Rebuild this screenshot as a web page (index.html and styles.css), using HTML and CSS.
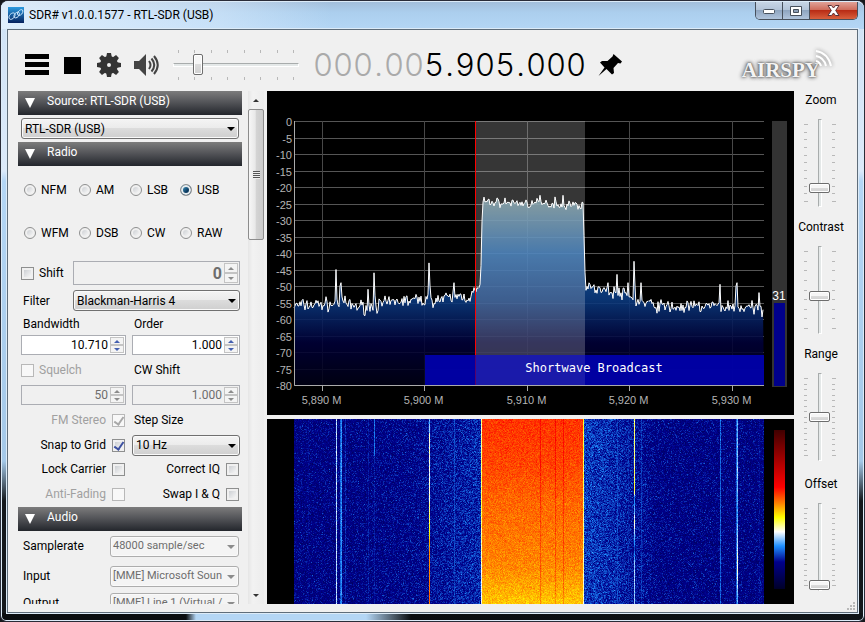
FILE: index.html
```
<!DOCTYPE html>
<html lang="en">
	<head>
		<meta charset="UTF-8">
		<title>SDR# v1.0.0.1577 - RTL-SDR (USB)</title>
		<link rel="stylesheet" href="styles.css">
	</head>
	<body>
		<div class="window">
			<header class="titlebar">
				<svg class="app_icon" viewBox="0 0 16 16">
					<defs><linearGradient id="ico" x1="0" y1="0" x2="0" y2="1"><stop offset="0" stop-color="#2b9be0"/><stop offset="1" stop-color="#06215e"/></linearGradient></defs>
					<rect width="16" height="16" fill="url(#ico)"/>
					<path d="M1 10.500C1 7.500 4 5.500 6 6s1 4-1 5.500-4 1-4-1zM6 8.500C7 5.500 10 4.500 11 5.500s0 4-2 5-3.500 0-3-2zM9.500 6C11 3 13.500 2 14.500 3s0 4-2 5-3.500 0-3-2z" fill="none" stroke="#cfeaff" stroke-width="1"/>
				</svg>
				<h1>SDR# v1.0.0.1577 - RTL-SDR (USB)</h1>
				<div class="win_buttons">
					<button type="button" class="win_min" aria-label="Minimize"><svg width="14" height="8" viewBox="0 0 14 8"><rect x="1.500" y="2.500" width="11" height="4" rx="1" fill="#fff" stroke="#47505c"/></svg></button>
					<button type="button" class="win_max" aria-label="Maximize"><svg width="12" height="10" viewBox="0 0 12 10"><path d="M.5.5h11v9H.5z" fill="#fff" stroke="#47505c"/><path d="M3.500 3.500h5v3h-5z" fill="#8b9db5" stroke="#47505c"/></svg></button>
					<button type="button" class="win_close" aria-label="Close"><svg width="13" height="11" viewBox="0 0 13 11"><path d="M1 .5h3.500l2 2.500 2-2.500H12L8.700 5.500l3.300 5H8.500l-2-2.500-2 2.500H1l3.300-5z" fill="#fff" stroke="#5a3036"/></svg></button>
				</div>
			</header>

			<main class="client">
				<div class="toolbar">
					<div class="tools">
						<button type="button" aria-label="Menu"><svg width="24" height="22" viewBox="0 0 24 22"><path d="M0 0h24v5H0zM0 8h24v5H0zM0 16h24v5H0z"/></svg></button>
						<button type="button" aria-label="Stop"><svg width="17" height="17" viewBox="0 0 17 17"><path d="M0 0h17v17H0z"/></svg></button>
						<button type="button" aria-label="Settings"><svg width="24" height="24" viewBox="0 0 24 24"><g fill="#333"><path fill-rule="evenodd" d="M12 3a9 9 0 1 0 0 18 9 9 0 0 0 0-18zm0 7a2 2 0 1 1 0 4 2 2 0 0 1 0-4z"/><path id="tooth" d="M10 0h4l1 5H9z"/><use href="#tooth" transform="rotate(45 12 12)"/><use href="#tooth" transform="rotate(90 12 12)"/><use href="#tooth" transform="rotate(135 12 12)"/><use href="#tooth" transform="rotate(180 12 12)"/><use href="#tooth" transform="rotate(225 12 12)"/><use href="#tooth" transform="rotate(270 12 12)"/><use href="#tooth" transform="rotate(315 12 12)"/></g></svg></button>
						<button type="button" aria-label="Mute"><svg width="25" height="22" viewBox="0 0 25 22"><path d="M0 7h5l7-7v22l-7-7H0z" fill="#444"/><path d="M15 7q3 4 0 8M17.500 4.500q5.500 6.500 0 13M20 2q7.500 9 0 18" fill="none" stroke="#444" stroke-width="2"/></svg></button>
					</div>
					<div class="volume">
						<div class="ticks" data-ticks="8"></div>
						<input type="range" min="0" max="100" value="17" aria-label="Volume">
						<div class="ticks" data-ticks="8"></div>
					</div>
					<div class="frequency">
						<span class="off">0</span><span class="off">0</span><span class="off">0</span><span class="dot off">.</span><span class="off">0</span><span class="off">0</span><span>5</span><span class="dot">.</span><span>9</span><span>0</span><span>5</span><span class="dot">.</span><span>0</span><span>0</span><span>0</span>
					</div>
					<button type="button" class="pin" aria-label="Center tuning"><svg width="25" height="24" viewBox="0 0 25 24"><path d="M15.500 1l8.500 7.500-1.500 2-2.500-.5-4.500 5 .5 5-2 1.500-5.500-5.500L.5 23l6-8.500L2 9.500 4 8l5.500 0 5-4.500z"/></svg></button>
					<a class="logo" href="#"><span>AIRSPY</span><svg width="20" height="20" viewBox="0 0 20 20"><path d="M2 12q4 1 5 5M2 7q8 1.500 10 10M2 2q12 2 15 15" fill="none" stroke="#fff" stroke-width="2"/></svg></a>
				</div>

				<div class="content">
					<form class="sidebar">
						<h2>Source: RTL-SDR (USB)</h2>
						<div class="source">
							<div class="combo"><select aria-label="Source"><option>RTL-SDR (USB)</option></select></div>
						</div>

						<h2>Radio</h2>
						<div class="modes">
							<label><input type="radio" name="mode">NFM</label>
							<label><input type="radio" name="mode">AM</label>
							<label><input type="radio" name="mode">LSB</label>
							<label><input type="radio" name="mode" checked>USB</label>
							<label><input type="radio" name="mode">WFM</label>
							<label><input type="radio" name="mode">DSB</label>
							<label><input type="radio" name="mode">CW</label>
							<label><input type="radio" name="mode">RAW</label>
						</div>
						<div class="shift">
							<label><input type="checkbox">Shift</label>
							<div class="spin big disabled"><input type="text" value="0" aria-label="Shift frequency" disabled><button type="button" class="up" aria-label="Up" disabled></button><button type="button" class="down" aria-label="Down" disabled></button></div>
							<label class="pad" for="filter">Filter</label>
							<div class="combo"><select id="filter"><option>Blackman-Harris 4</option></select></div>
						</div>
						<div class="params">
							<label class="pad" for="bandwidth">Bandwidth</label>
							<label class="pad" for="order">Order</label>
							<div class="spin"><input type="text" id="bandwidth" value="10.710"><button type="button" class="up" aria-label="Up"></button><button type="button" class="down" aria-label="Down"></button></div>
							<div class="spin"><input type="text" id="order" value="1.000"><button type="button" class="up" aria-label="Up"></button><button type="button" class="down" aria-label="Down"></button></div>
							<label class="gray"><input type="checkbox" disabled>Squelch</label>
							<label class="pad" for="cwshift">CW Shift</label>
							<div class="spin disabled"><input type="text" value="50" aria-label="Squelch level" disabled><button type="button" class="up" aria-label="Up" disabled></button><button type="button" class="down" aria-label="Down" disabled></button></div>
							<div class="spin disabled"><input type="text" id="cwshift" value="1.000" disabled><button type="button" class="up" aria-label="Up" disabled></button><button type="button" class="down" aria-label="Down" disabled></button></div>
							<label class="right gray">FM Stereo<input type="checkbox" checked disabled></label>
							<label class="pad" for="step">Step Size</label>
							<label class="right">Snap to Grid<input type="checkbox" checked></label>
							<div class="combo"><select id="step"><option>10 Hz</option></select></div>
							<label class="right">Lock Carrier<input type="checkbox"></label>
							<label class="right">Correct IQ<input type="checkbox"></label>
							<label class="right gray">Anti-Fading<input type="checkbox" disabled></label>
							<label class="right">Swap I &amp; Q<input type="checkbox"></label>
						</div>

						<h2>Audio</h2>
						<div class="audio">
							<label for="samplerate">Samplerate</label>
							<div class="combo disabled"><select id="samplerate" disabled><option>48000 sample/sec</option></select></div>
							<label for="input">Input</label>
							<div class="combo disabled"><select id="input" disabled><option>[MME] Microsoft Soun</option></select></div>
							<label for="output">Output</label>
							<div class="combo disabled"><select id="output" disabled><option>[MME] Line 1 (Virtual /</option></select></div>
						</div>
					</form>

					<div class="scrollbar">
						<button type="button" class="up" aria-label="Scroll up"></button>
						<div class="thumb"><i></i></div>
						<button type="button" class="down" aria-label="Scroll down"></button>
					</div>

					<section class="displays">
						<svg class="spectrum" id="spectrum"></svg>
						<div class="waterfall">
							<canvas id="waterfall"></canvas>
							<div class="legend"></div>
						</div>
					</section>

					<aside class="sliders">
						<div class="slider">
							<label for="zoom">Zoom</label>
							<div class="track"><div class="ticks" data-ticks="11"></div><input type="range" id="zoom" min="0" max="100" value="17"><div class="ticks" data-ticks="11"></div></div>
						</div>
						<div class="slider">
							<label for="contrast">Contrast</label>
							<div class="track"><div class="ticks" data-ticks="9"></div><input type="range" id="contrast" min="0" max="100" value="42"><div class="ticks" data-ticks="9"></div></div>
						</div>
						<div class="slider">
							<label for="range">Range</label>
							<div class="track"><div class="ticks" data-ticks="15"></div><input type="range" id="range" min="0" max="100" value="50"><div class="ticks" data-ticks="15"></div></div>
						</div>
						<div class="slider">
							<label for="offset">Offset</label>
							<div class="track"><div class="ticks" data-ticks="16"></div><input type="range" id="offset" min="0" max="100" value="0"><div class="ticks" data-ticks="16"></div></div>
						</div>
					</aside>
				</div>
				<svg class="grip" width="9" height="9" viewBox="0 0 9 9"><path d="M6 0h2v2H6zM3 3h2v2H3zM6 3h2v2H6zM0 6h2v2H0zM3 6h2v2H3zM6 6h2v2H6z" fill="#b8b8b8"/></svg>
			</main>
		</div>
		<script src="app.js"></script>
	</body>
</html>
```
FILE: styles.css
```
*{
	box-sizing: border-box;
	margin: 0;
	padding: 0;
}
body{
	background-color: #15181c;
	font-family: Roboto, "Liberation Sans", sans-serif;
	font-size: 12px;
	line-height: 16px;
	color: #000;
}
button,input,select{
	font: inherit;
	color: inherit;
	border: 0;
	background: none;
}
input,select{
	min-width: 0;
	outline: 0;
}
/* window frame */
.window{
	display: flex;
	flex-direction: column;
	height: 100vh;
	padding: 0 6px 8px 6px;
	border: 1px solid #2a2c38;
	border-radius: 8px 8px 6px 6px;
	box-shadow: inset 0 0 0 1px #dcebf8;
	background:
		linear-gradient(90deg,#0a0d10 0,#0a0d10 185px,#b4d6f5 195px,#b4d6f5 365px,#0a0d10 410px,#0f1418 100%) bottom/100% 8px no-repeat,
		linear-gradient(#cfe2f5 0,#dceafa 170px,#b4d6f5 180px,#a4c8e8 460px,#14181c 500px,#14181c 100%);
}
.titlebar{
	display: flex;
	align-items: flex-start;
	height: 28px;
	margin: 0 -6px;
	padding: 0 6px 0 7px;
	border-top: 1px solid #dcebf8;
	border-radius: 7px 7px 0 0;
	background: linear-gradient(90deg,rgba(235,245,255,.8) 0,rgba(220,236,252,.5) 220px,transparent 330px),linear-gradient(#a3bfdb,#accfee 40%,#b4d6f5);
}
.app_icon{
	width: 16px;
	height: 16px;
	margin: 5px 5px 0 0;
}
.titlebar h1{
	flex: 1;
	font-size: 12px;
	font-weight: normal;
	line-height: 26px;
	white-space: nowrap;
}
.win_buttons{
	display: flex;
	height: 18px;
	border: 1px solid #47505c;
	border-top: 0;
	border-radius: 0 0 5px 5px;
	overflow: hidden;
}
.win_buttons button{
	display: flex;
	align-items: center;
	justify-content: center;
	width: 27px;
	border-right: 1px solid #47505c;
	background: linear-gradient(#c7d5e5,#b3c4d8 45%,#8fa5c0 50%,#b0c4dc);
}
.win_buttons .win_close{
	width: 47px;
	border: 0;
	background: linear-gradient(#e0a298,#cf6d5c 45%,#b92c15 50%,#d9603d);
}
.client{
	flex: 1;
	display: flex;
	flex-direction: column;
	min-height: 0;
	position: relative;
	padding: 0 9px 8px 10px;
	border: 1px solid #5f6d7a;
	background-color: #f0f0f0;
	box-shadow: 0 0 0 1px #dcebf8;
}
.grip{
	position: absolute;
	right: 1px;
	bottom: 1px;
}
/* toolbar */
.toolbar{
	display: flex;
	align-items: center;
	height: 61px;
	padding-top: 9px;
}
.tools{
	display: flex;
	align-items: center;
	gap: 13px;
	margin-left: 7px;
}
.tools button,.pin{
	display: flex;
}
.tools button:first-child{
	margin-right: 2px;
}
.tools button:nth-child(2){
	margin-right: 3px;
}
.volume{
	display: flex;
	flex-direction: column;
	width: 126px;
	margin: 0 14px;
	gap: 1px;
}
.volume .ticks{
	display: flex;
	justify-content: space-between;
	padding: 0 5px;
}
.volume .ticks i{
	width: 1px;
	height: 3px;
	background-color: #b8b8b8;
}
.frequency{
	display: flex;
	font-family: Inter, "DejaVu Sans", sans-serif;
	font-size: 31px;
	font-weight: 300;
	line-height: 36px;
}
.frequency span{
	width: 20px;
	text-align: center;
}
.frequency .dot{
	width: 11px;
}
.frequency .off{
	color: #aaa;
}
.pin{
	margin-left: 12px;
}
.logo{
	display: flex;
	align-items: flex-start;
	margin: 0 14px 0 auto;
	color: #f4f4f4;
	text-decoration: none;
}
.logo span{
	padding-top: 10px;
	font-family: "Liberation Serif", serif;
	font-size: 21px;
	font-weight: bold;
	line-height: 22px;
	text-shadow: 0 0 2px #555,0 0 4px #666,-1px 0 4px #888;
}
.logo svg{
	margin-left: -6px;
	filter: drop-shadow(0 0 2px #888);
}
/* range inputs */
input[type=range]{
	-webkit-appearance: none;
	appearance: none;
	width: 126px;
	height: 22px;
}
input[type=range]::-webkit-slider-runnable-track{
	height: 4px;
	border: 1px solid #fff;
	border-top-color: #a8acac;
	background-color: #e4e8e8;
}
input[type=range]::-webkit-slider-thumb{
	-webkit-appearance: none;
	width: 10px;
	height: 21px;
	margin-top: -10px;
	border: 1px solid #6d6d6d;
	border-radius: 2px;
	background: linear-gradient(#f6f6f6 50%,#dcdcdc 50%,#d0d0d0);
	box-shadow: inset 0 0 0 1px #fff;
}
.sliders{
	width: 54px;
}
.slider{
	display: flex;
	flex-direction: column;
	align-items: center;
	height: 127px;
}
.slider:last-child{
	margin-top: 3px;
}
.slider label{
	margin-bottom: 10px;
	line-height: 18px;
}
.track{
	display: flex;
	margin-right: 3px;
	gap: 1px;
}
.track .ticks{
	display: flex;
	flex-direction: column;
	justify-content: space-between;
	width: 4px;
	padding: 5px 0;
}
.track .ticks i{
	width: 3px;
	height: 1px;
	margin: 0 auto;
	background-color: #b8b8b8;
}
.track .ticks i:first-child,.track .ticks i:last-child{
	width: 4px;
}
.track input[type=range]{
	writing-mode: vertical-lr;
	direction: rtl;
	width: 22px;
	height: 88px;
}
.track input[type=range]::-webkit-slider-runnable-track{
	width: 4px;
	height: 88px;
	border-color: #a8acac #fff #fff #a8acac;
}
.track input[type=range]::-webkit-slider-thumb{
	width: 21px;
	height: 10px;
	margin: 0 0 0 -10px;
}
/* content */
.content{
	flex: 1;
	display: flex;
	min-height: 0;
}
.sidebar{
	width: 224px;
	overflow: hidden;
}
.sidebar h2{
	display: flex;
	align-items: center;
	height: 24px;
	padding: 0 0 4px 29px;
	position: relative;
	background: linear-gradient(#7c7c7c,#55565a 45%,#23262c);
	color: #fff;
	font-size: 12px;
	font-weight: normal;
}
.sidebar h2::before{
	content: "";
	position: absolute;
	left: 7px;
	top: 7px;
	border: 5px solid transparent;
	border-top: 10px solid #fff;
	border-bottom: 0;
}
.sidebar label{
	display: flex;
	align-items: center;
	gap: 5px;
	white-space: nowrap;
}
.sidebar .pad{
	padding-left: 2px;
}
.sidebar .right{
	justify-content: flex-end;
	padding-right: 1px;
	gap: 6px;
}
.sidebar .gray{
	color: #a0a0a0;
}
.source{
	padding: 3px;
}
.modes{
	display: grid;
	grid-template-columns: 55px 51px 50px 1fr;
	grid-template-rows: 43px 43px;
	padding: 2px 0 5px 6px;
}
.shift{
	display: grid;
	grid-template-columns: 52px 1fr;
	grid-template-rows: 28px 27px;
	align-items: center;
	padding: 0 2px 0 3px;
}
.params{
	display: grid;
	grid-template-columns: 105px 1fr;
	grid-template-rows: 20px 22px 28px 22px 28px 22px 26px 24px;
	column-gap: 6px;
	align-items: center;
	padding: 0 2px 1px 3px;
}
.audio{
	display: grid;
	grid-template-columns: 87px 1fr;
	grid-template-rows: 30px 30px 24px;
	align-items: center;
	padding: 0 3px 0 5px;
}
.combo{
	position: relative;
}
.combo select{
	-webkit-appearance: none;
	appearance: none;
	display: block;
	width: 100%;
	height: 21px;
	padding: 0 14px 0 3px;
	border: 1px solid #707070;
	border-radius: 3px;
	background: linear-gradient(#f4f4f4,#ebebeb 48%,#dcdcdc 50%,#cfcfcf);
	box-shadow: inset 0 0 0 1px #fafafa;
}
.combo::after{
	content: "";
	position: absolute;
	right: 4px;
	top: 9px;
	border: 4px solid transparent;
	border-top-color: #000;
	border-bottom: 0;
	pointer-events: none;
}
.combo.disabled select{
	padding-left: 2px;
	border-color: #adadad;
	background: #f4f4f4;
	color: #6d6d6d;
	font-size: 11px;
	opacity: 1;
}
.combo.disabled::after{
	border-top-color: #8c8c8c;
}
.spin{
	display: grid;
	grid-template-columns: 1fr 14px;
	grid-template-rows: 1fr 1fr;
	height: 20px;
	padding: 1px;
	border: 1px solid #abadb3;
	background-color: #fff;
}
.spin.big{
	height: 24px;
}
.spin.big input{
	font-size: 16px;
	font-weight: bold;
}
.spin input{
	grid-row: 1 / 3;
	width: 100%;
	padding-right: 2px;
	text-align: right;
}
.spin.disabled{
	background-color: #f0f0f0;
	color: #6d6d6d;
}
.up,.down{
	display: flex;
	align-items: center;
	justify-content: center;
}
.spin button{
	border: 1px solid #c4c4c4;
	background-color: #f4f4f4;
	color: #4560b0;
}
.spin.disabled button{
	color: #8c8c8c;
}
.up::before,.down::before{
	content: "";
	border: 3px solid transparent;
	border-bottom-color: currentColor;
	border-top: 0;
}
.down::before{
	border: 3px solid transparent;
	border-top-color: currentColor;
	border-bottom: 0;
}
input[type=checkbox],input[type=radio]{
	-webkit-appearance: none;
	appearance: none;
	flex: none;
	display: flex;
	align-items: center;
	justify-content: center;
	width: 13px;
	height: 13px;
	border: 1px solid #8e8f8f;
	background: linear-gradient(135deg,#cdd0d4,#f6f6f6) content-box #f8f8f8;
	padding: 2px;
}
input[type=radio]{
	width: 12px;
	height: 12px;
	border-radius: 50%;
}
input[type=radio]:checked{
	background: linear-gradient(135deg,#4fb4e0,#0b3a60 60%);
	box-shadow: inset 0 0 0 2px #e8ecee;
}
input[type=checkbox]:checked{
	position: relative;
}
input[type=checkbox]:checked::before{
	content: "";
	position: absolute;
	left: 3px;
	top: 0;
	width: 4px;
	height: 8px;
	border: solid #3c50a0;
	border-width: 0 2px 2px 0;
	transform: rotate(35deg);
}
input[type=checkbox]:disabled{
	border-color: #b8b8b8;
	background: #f8f8f8;
}
input[type=checkbox]:disabled::before{
	border-color: #a8a8a8;
}
/* scrollbar */
.scrollbar{
	display: flex;
	flex-direction: column;
	width: 16px;
	margin: 0 3px 0 6px;
	background: linear-gradient(90deg,#e6e6e6,#f2f2f2 30%,#ececec);
}
.scrollbar button{
	height: 18px;
	color: #333;
}
.scrollbar .down{
	margin-top: auto;
}
.scrollbar .thumb{
	display: flex;
	align-items: center;
	justify-content: center;
	height: 131px;
	border: 1px solid #8c8c8c;
	border-radius: 2px;
	background: linear-gradient(90deg,#f6f6f6,#e8e8e8 45%,#d4d4d4 50%,#cacaca);
}
.scrollbar .thumb i{
	width: 7px;
	height: 8px;
	background: repeating-linear-gradient(#555 0,#555 1px,#eee 1px,#eee 2px);
}
/* spectrum and waterfall */
.displays{
	flex: 1;
	display: flex;
	flex-direction: column;
	gap: 4px;
	min-width: 0;
}
.spectrum{
	flex: 324 1 0;
	width: 100%;
	min-height: 0;
	background-color: #000;
	font-family: "Liberation Sans", sans-serif;
	font-size: 11px;
}
.spectrum .scale{
	fill: #b4b4b4;
}
.spectrum .band{
	fill: #fff;
	font-family: "DejaVu Sans Mono", monospace;
	font-size: 12px;
}
.waterfall{
	flex: 185 1 0;
	display: flex;
	min-height: 0;
	padding: 0 9px 0 27px;
	background-color: #000;
}
.waterfall canvas{
	flex: 1;
	min-width: 0;
	height: 100%;
}
.legend{
	width: 11px;
	margin: 11px 0 15px 10px;
	background: linear-gradient(#400000,#f00 36%,#ff8000 46%,#ff0 55%,#fff 64%,#1e90ff 73%,#00008b 83%,#000028);
}
```
FILE: app.js
```
var seed=7;
function rnd(){
	seed=(seed*16807)%2147483647;
	return seed/2147483647;
}
function gauss(){
	return rnd()+rnd()+rnd()-1.5;
}
// value at x on a list of [x,value] points
function curve(pts,x){
	if(x<=pts[0][0]) return pts[0][1];
	for(var i=1;i<pts.length;i++){
		if(x<=pts[i][0]){
			var a=pts[i-1],b=pts[i];
			return a[1]+(b[1]-a[1])*(x-a[0])/(b[0]-a[0]);
		}
	}
	return pts[pts.length-1][1];
}

// slider ticks
document.querySelectorAll('[data-ticks]').forEach(function(el){
	el.innerHTML='<i></i>'.repeat(el.dataset.ticks);
});

// positions below are in 1/470 of the displayed span
var SPAN=470;
var floor_db=[[0,-56],[28,-55.5],[60,-56],[75,-56.5],[105,-54.5],[150,-54],[165,-53],[175,-53.5],[180,-52],[186.5,-50],[188.5,-24.5],[289,-25.5],[291.5,-50],[310,-51],[335,-53],[345,-55],[365,-56],[385,-56.5],[420,-56],[470,-57]];
var peaks=[[42,-45],[43,-54],[46,-50],[47,-49],[51,-53],[74,-51],[80,-46],[81,-53],[135,-43],[136,-50],[160,-49],[246,-22.5],[261,-23],[269,-22.5],[323,-46.5],[334,-49],[340,-42.5],[341,-50],[347,-49],[426,-49.5],[442,-50],[443,-49],[465,-52]];

function drawSpectrum(){
	var svg=document.getElementById('spectrum');
	var w=svg.clientWidth,h=svg.clientHeight;
	var left=27,right=w-30,top=30,bottom=h-30;
	var sx=(right-left)/SPAN,sy=(bottom-top)/80;
	var X=function(x){return left+x*sx;};
	var Y=function(db){return top-db*sy;};
	var s='<defs><linearGradient id="fill" gradientUnits="userSpaceOnUse" x1="0" x2="0" y1="'+top+'" y2="'+bottom+'">'+
		'<stop offset="0" stop-color="#fff"/><stop offset=".31" stop-color="#6c909c"/><stop offset=".5" stop-color="#1c62aa"/>'+
		'<stop offset=".68" stop-color="#0b3a80"/><stop offset=".84" stop-color="#000038"/><stop offset="1" stop-color="#000014"/></linearGradient></defs>';
	for(var db=0;db>=-80;db-=5){
		var y=Math.round(Y(db))+.5;
		s+='<path d="M'+left+' '+y+'H'+right+'" stroke="#555"/>';
		s+='<text class="scale" text-anchor="end" x="'+(left-2)+'" y="'+(y+4)+'">'+db+'</text>';
	}
	for(var i=0;i<5;i++){
		var x=Math.round(X(27.7+i*102.6))+.5;
		s+='<path d="M'+x+' '+top+'V'+(bottom+6)+'" stroke="#484848"/>';
		s+='<path d="M'+x+' '+bottom+'v6" stroke="#aaa"/>';
		s+='<text class="scale" text-anchor="middle" x="'+(x-1)+'" y="'+(bottom+19)+'">5,'+(890+i*10)+' M</text>';
	}
	seed=7;
	var peak={};
	peaks.forEach(function(p){peak[p[0]]=p[1];});
	var pts=[];
	for(var n=0;n<SPAN;n++){
		var flat=n>187&&n<289;
		var v=curve(floor_db,n)+gauss()*(flat?1.4:(n>180&&n<300?1:2));
		if(peak[n]!==undefined) v=peak[n];
		pts.push(X(n).toFixed(1)+','+Y(v).toFixed(1));
	}
	s+='<polygon points="'+left+','+bottom+' '+pts.join(' ')+' '+right+','+bottom+'" fill="url(#fill)" fill-opacity=".88"/>';
	s+='<polyline points="'+pts.join(' ')+'" fill="none" stroke="#fff"/>';
	s+='<rect x="'+X(131)+'" y="'+(bottom-30)+'" width="'+(right-X(131))+'" height="30" fill="#0000b4" fill-opacity=".88"/>';
	s+='<rect x="'+X(182)+'" y="'+top+'" width="'+(109*sx)+'" height="'+(bottom-top-30)+'" fill="#fff" fill-opacity=".21"/>';
	s+='<rect x="'+X(182)+'" y="'+(bottom-30)+'" width="'+(109*sx)+'" height="30" fill="#fff" fill-opacity=".1"/>';
	// tuning line
	var tx=Math.round(X(181))+.5;
	s+='<path d="M'+tx+' '+top+'V'+(bottom-30)+'" stroke="#f00"/>';
	s+='<path d="M'+tx+' '+(bottom-30)+'v30" stroke="#f00" stroke-opacity=".35"/>';
	s+='<text class="band" text-anchor="middle" x="'+X(300)+'" y="'+(bottom-13)+'">Shortwave Broadcast</text>';
	s+='<path d="M'+(left+.5)+' '+top+'V'+(bottom+.5)+'H'+right+'" fill="none" stroke="#aaa"/>';
	// signal meter
	s+='<rect x="'+(w-22)+'" y="'+top+'" width="15" height="'+(bottom-top+2)+'" fill="#333"/>';
	s+='<rect x="'+(w-20)+'" y="'+(bottom-82)+'" width="11" height="83" fill="#00008b"/>';
	s+='<text x="'+(w-15)+'" y="'+(bottom-85)+'" text-anchor="middle" fill="#fff" font-size="12">31</text>';
	svg.innerHTML=s;
}

var palette=[[0,[0,0,40]],[.17,[0,0,139]],[.27,[30,144,255]],[.36,[255,255,255]],[.45,[255,255,0]],[.54,[255,128,0]],[.64,[255,0,0]],[1,[64,0,0]]];
function color(v,k){
	return curve(palette.map(function(p){return [p[0],p[1][k]];}),v);
}
var lut=[];
for(var c=0;c<=255;c++) lut.push([color(c/255,0),color(c/255,1),color(c/255,2)]);

var noise=[[0,.155],[50,.155],[120,.165],[150,.18],[185,.195],[291,.21],[320,.195],[345,.175],[365,.158],[470,.155]];
// carriers: position -> level from top to bottom
var carriers={
	14:[[0,.175]],
	42:[[0,.33]],46:[[0,.24]],47:[[0,.27]],51:[[0,.2]],
	74:[[0,.19]],80:[[0,.25],[.19,.25],[.2,.19]],
	135:[[0,.3],[.07,.31],[.08,.39],[.25,.36],[.45,.38],[.6,.45],[.7,.53],[1,.56]],
	160:[[0,.22]],
	187:[[0,.4],[.5,.42],[1,.35]],
	289:[[0,.44],[1,.38]],
	323:[[0,.22]],334:[[0,.2]],
	340:[[0,.4],[.4,.42],[.42,.25],[.5,.3],[.55,.38],[.7,.24],[.8,.32],[1,.32]],
	347:[[0,.21]],426:[[0,.24]],442:[[0,.24]],443:[[0,.29],[.3,.32],[.5,.28],[.8,.38],[1,.28]],465:[[0,.18]]
};

function drawWaterfall(){
	var cv=document.getElementById('waterfall');
	var w=cv.width=cv.clientWidth,h=cv.height=cv.clientHeight;
	var ctx=cv.getContext('2d');
	var img=ctx.createImageData(w,h);
	seed=99;
	for(var y=0;y<h;y++){
		var t=y/h;
		for(var x=0;x<w;x++){
			var n=Math.floor(x*SPAN/w),v;
			if(n>187&&n<289){
				v=curve([[0,.6],[.25,.585],[.45,.56],[.8,.535],[1,.49]],t)+gauss()*.03;
				if(n==246||n==261||n==269) v+=.04;
			}else if(carriers[n]){
				v=curve(carriers[n],t)+gauss()*.03;
			}else{
				v=curve(noise,n)+gauss()*.05;
				if(rnd()<.05) v+=.03;
			}
			var rgb=lut[Math.max(0,Math.min(255,Math.round(v*255)))];
			var o=(y*w+x)*4;
			img.data[o]=rgb[0];
			img.data[o+1]=rgb[1];
			img.data[o+2]=rgb[2];
			img.data[o+3]=255;
		}
	}
	ctx.putImageData(img,0,0);
}
function draw(){
	drawSpectrum();
	drawWaterfall();
}
draw();
window.addEventListener('resize',draw);
```
